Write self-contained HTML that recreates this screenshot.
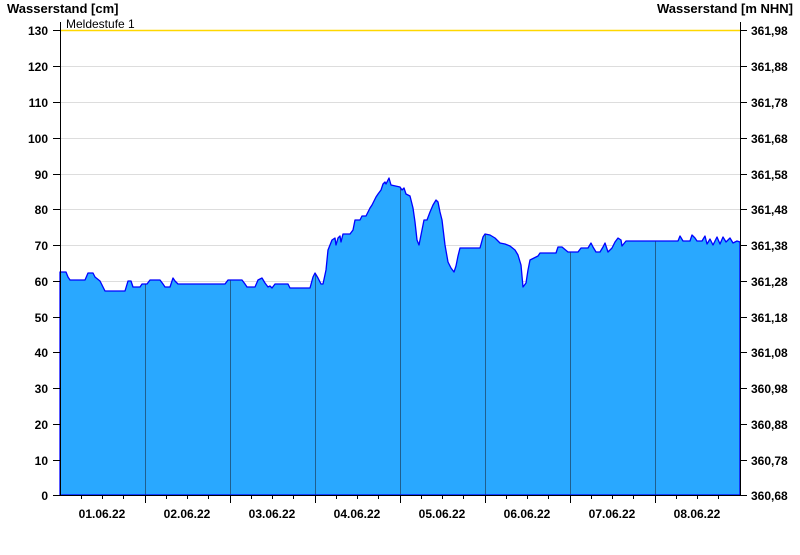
<!DOCTYPE html>
<html><head><meta charset="utf-8"><style>
body{margin:0;background:#fff;width:800px;height:550px;overflow:hidden}
svg text{font-family:"Liberation Sans",Arial,sans-serif;font-weight:bold;font-size:12px;fill:#000}
</style></head><body>
<svg width="800" height="550" xmlns="http://www.w3.org/2000/svg">
<defs><clipPath id="c"><polygon id="pp" points="60,495 60,272 66,272 68,277 70,280 85,280 88,273 93,273 95,277 100,281 103,287 105,291 125,291 128,281 131,281 133,287 140,287 142,284 147,284 150,280 160,280 163,284 165,287 170,287 173,278 175,281 178,284 225,284 228,280 242,280 245,284 247,287 255,287 258,280 262,278 265,283 268,287 270,286 272,288 275,284 288,284 290,288 310,288 313,277 315,273 318,278 321,284 323,284 326,270 328,250 330,245 332,240 335,238 336,245 338,238 340,236 341,242 343,234 350,234 353,230 355,220 360,220 362,216 366,216 368,212 370,208 372,205 374,201 376,197 378,194 381,190 383,184 385,182 386,184 389,178 391,185 400,187 402,190 404,188 406,194 410,196 413,208 415,222 417,240 419,245 422,230 424,220 427,220 430,212 433,205 436,200 438,202 440,212 442,220 445,245 448,262 451,268 454,272 456,266 458,256 460,248 480,248 483,237 485,234 490,235 495,238 500,243 505,244 510,246 515,250 518,255 521,265 523,287 526,283 528,270 530,260 534,258 538,256 540,253 556,253 558,247 562,247 568,252 578,252 581,248 588,248 591,243 593,247 596,252 600,252 603,247 605,243 608,252 612,248 615,242 618,238 621,240 622,246 626,241 678,241 680,236 683,241 690,241 692,235 695,238 697,241 702,241 705,236 707,244 710,239 713,245 717,237 720,244 723,237 726,242 730,238 733,243 737,241 740,242 740,495"/></clipPath></defs>
<g stroke="#ddd" stroke-width="1">
<line x1="60" x2="740" y1="66.5" y2="66.5"/><line x1="60" x2="740" y1="102.5" y2="102.5"/><line x1="60" x2="740" y1="138.5" y2="138.5"/><line x1="60" x2="740" y1="174.5" y2="174.5"/><line x1="60" x2="740" y1="209.5" y2="209.5"/><line x1="60" x2="740" y1="245.5" y2="245.5"/><line x1="60" x2="740" y1="281.5" y2="281.5"/><line x1="60" x2="740" y1="317.5" y2="317.5"/><line x1="60" x2="740" y1="352.5" y2="352.5"/><line x1="60" x2="740" y1="388.5" y2="388.5"/><line x1="60" x2="740" y1="424.5" y2="424.5"/><line x1="60" x2="740" y1="460.5" y2="460.5"/>
</g>
<line x1="60" x2="740" y1="30.5" y2="30.5" stroke="#ffd700" stroke-width="1.5"/>
<use href="#pp" fill="#29a8ff"/>
<g stroke="#1f5f8f" stroke-width="1" clip-path="url(#c)">
<line x1="145.5" x2="145.5" y1="200" y2="495"/><line x1="230.5" x2="230.5" y1="200" y2="495"/><line x1="315.5" x2="315.5" y1="200" y2="495"/><line x1="400.5" x2="400.5" y1="150" y2="495"/><line x1="485.5" x2="485.5" y1="200" y2="495"/><line x1="570.5" x2="570.5" y1="200" y2="495"/><line x1="655.5" x2="655.5" y1="200" y2="495"/>
</g>
<use href="#pp" fill="none" stroke="#0000ff" stroke-width="1.3" stroke-linejoin="round"/>
<g stroke="#000" stroke-width="1">
<line x1="60.5" x2="60.5" y1="22" y2="495"/><line x1="740.5" x2="740.5" y1="22" y2="495"/><line x1="60" x2="741" y1="495.5" y2="495.5"/>
<path d="M53 30.5h7M53 66.5h7M53 102.5h7M53 138.5h7M53 174.5h7M53 209.5h7M53 245.5h7M53 281.5h7M53 317.5h7M53 352.5h7M53 388.5h7M53 424.5h7M53 460.5h7M53 495.5h7"/>
<path d="M740 30.5h7M740 66.5h7M740 102.5h7M740 138.5h7M740 174.5h7M740 209.5h7M740 245.5h7M740 281.5h7M740 317.5h7M740 352.5h7M740 388.5h7M740 424.5h7M740 460.5h7M740 495.5h7"/>
<path d="M145.5 495v8M230.5 495v8M315.5 495v8M400.5 495v8M485.5 495v8M570.5 495v8M655.5 495v8"/>
<path d="M81.5 495v4M102.5 495v4M123.5 495v4M166.5 495v4M187.5 495v4M208.5 495v4M251.5 495v4M272.5 495v4M293.5 495v4M336.5 495v4M357.5 495v4M378.5 495v4M421.5 495v4M442.5 495v4M463.5 495v4M506.5 495v4M527.5 495v4M548.5 495v4M591.5 495v4M612.5 495v4M633.5 495v4M676.5 495v4M697.5 495v4M718.5 495v4"/>
</g>
<text x="7" y="13" style="font-size:13px">Wasserstand [cm]</text>
<text x="793" y="13" text-anchor="end" style="font-size:13px">Wasserstand [m NHN]</text>
<text x="66" y="28" style="font-weight:normal;font-size:12px">Meldestufe 1</text>
<g text-anchor="end">
<text x="48" y="35">130</text><text x="48" y="71">120</text><text x="48" y="107">110</text><text x="48" y="143">100</text><text x="48" y="179">90</text><text x="48" y="214">80</text><text x="48" y="250">70</text><text x="48" y="286">60</text><text x="48" y="322">50</text><text x="48" y="357">40</text><text x="48" y="393">30</text><text x="48" y="429">20</text><text x="48" y="465">10</text><text x="48" y="500">0</text>
</g>
<g>
<text x="751" y="35">361,98</text><text x="751" y="71">361,88</text><text x="751" y="107">361,78</text><text x="751" y="143">361,68</text><text x="751" y="179">361,58</text><text x="751" y="214">361,48</text><text x="751" y="250">361,38</text><text x="751" y="286">361,28</text><text x="751" y="322">361,18</text><text x="751" y="357">361,08</text><text x="751" y="393">360,98</text><text x="751" y="429">360,88</text><text x="751" y="465">360,78</text><text x="751" y="500">360,68</text>
</g>
<g text-anchor="middle">
<text x="102" y="518">01.06.22</text><text x="187" y="518">02.06.22</text><text x="272" y="518">03.06.22</text><text x="357" y="518">04.06.22</text><text x="442" y="518">05.06.22</text><text x="527" y="518">06.06.22</text><text x="612" y="518">07.06.22</text><text x="697" y="518">08.06.22</text>
</g>
</svg>
</body></html>
